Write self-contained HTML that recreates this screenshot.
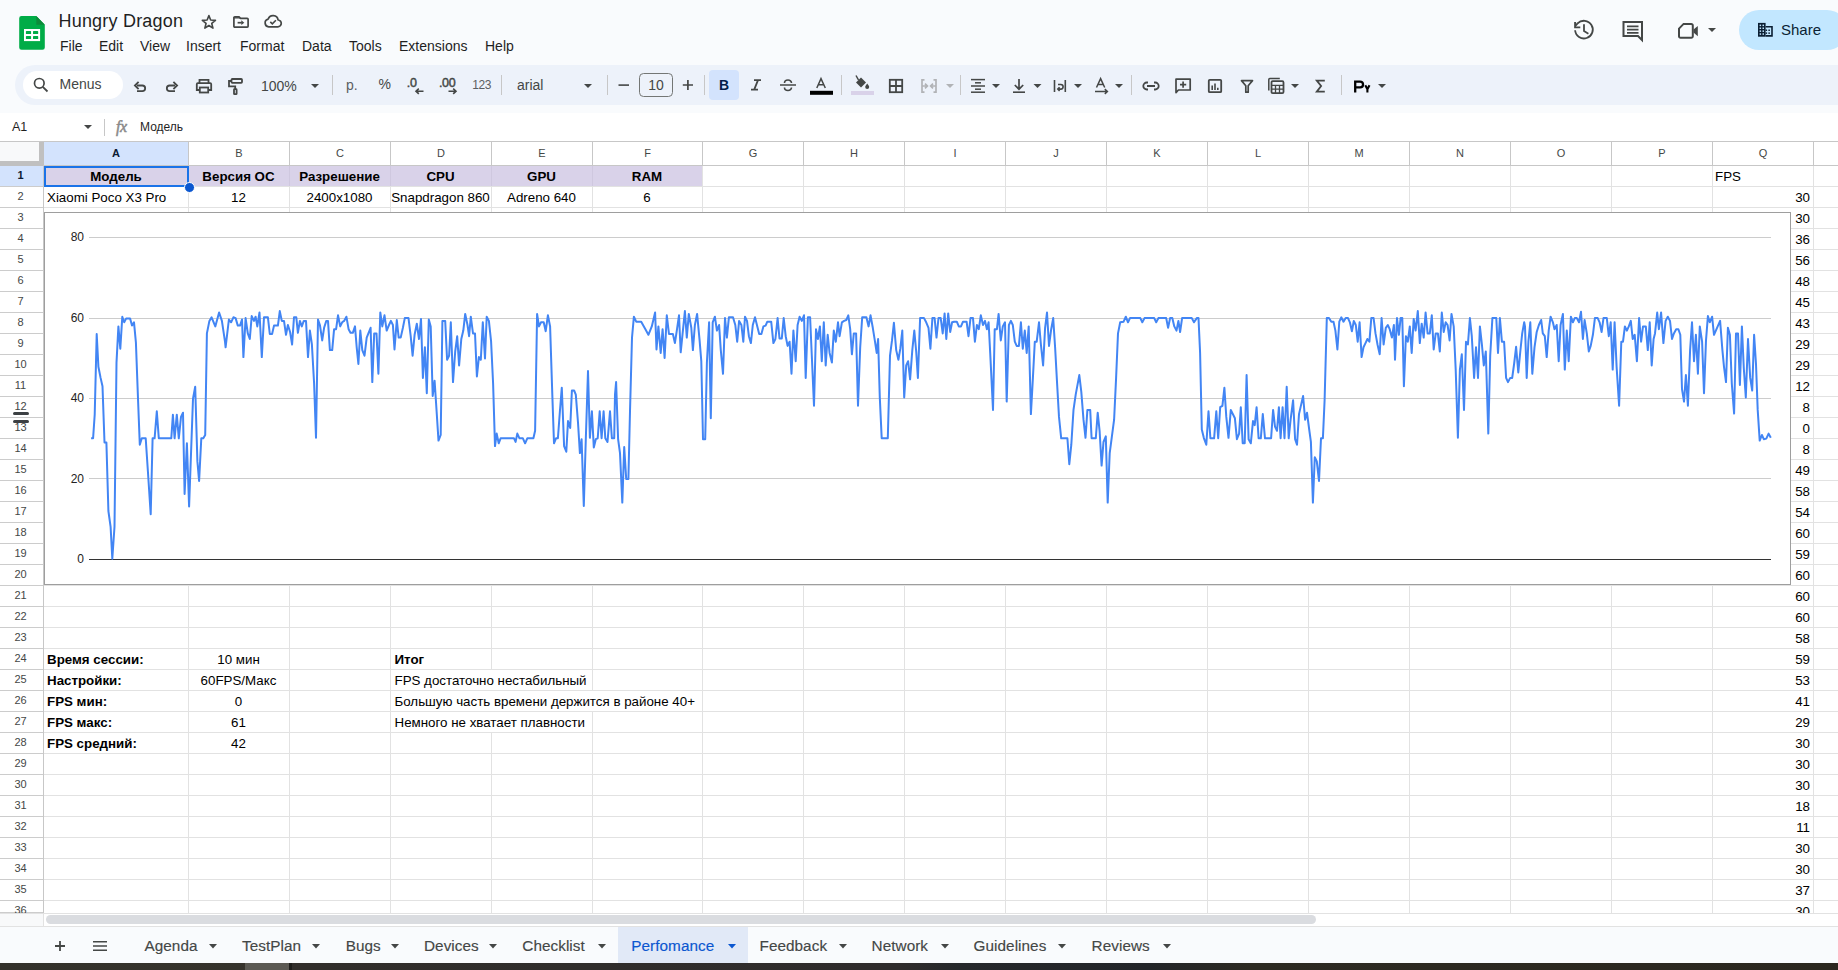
<!DOCTYPE html><html><head><meta charset="utf-8"><style>
*{margin:0;padding:0;box-sizing:border-box}
html,body{width:1838px;height:970px;overflow:hidden;background:#f9fbfd;font-family:"Liberation Sans", sans-serif;position:relative}
.a{position:absolute}
.t{position:absolute;white-space:nowrap}
.menu{position:absolute;top:37px;font-size:14px;color:#1f1f1f;line-height:18px}
.ch{position:absolute;top:142px;height:23px;font-size:11px;color:#444746;text-align:center;line-height:22px;background:#fff;border-right:1px solid #c7c7c7}
.rh{position:absolute;left:0;width:43px;padding-right:2px;font-size:11px;color:#444746;text-align:center;background:#fff;border-bottom:1px solid #cccccc}
.cell{position:absolute;font-size:13.33px;color:#000;white-space:nowrap;line-height:24px;height:21px}
.tab{position:absolute;top:928px;height:36px;font-size:15.3px;letter-spacing:0.05px;color:#444746;line-height:36px;-webkit-text-stroke:0.15px currentColor}
</style></head><body>
<svg class="a" style="left:18px;top:15px" width="28" height="36" viewBox="18 15 28 36">
<path d="M21.5 16H36.3L44.8 24.7V47.5A2.3 2.3 0 0 1 42.5 49.8H21.5A2.3 2.3 0 0 1 19.2 47.5V18.3A2.3 2.3 0 0 1 21.5 16Z" fill="#00ac47"/>
<path d="M36.3 16L44.8 24.7H36.3Z" fill="#0d8b3a"/>
<rect x="24" y="29" width="16.1" height="12.1" fill="#fff"/>
<rect x="25.9" y="31.1" width="5.2" height="2.9" rx="0.6" fill="#00ac47"/><rect x="33" y="31.1" width="5.2" height="2.9" rx="0.6" fill="#00ac47"/>
<rect x="25.9" y="36.1" width="5.2" height="2.9" rx="0.6" fill="#00ac47"/><rect x="33" y="36.1" width="5.2" height="2.9" rx="0.6" fill="#00ac47"/>
</svg>
<div class="t" style="left:58.5px;top:10px;font-size:18px;line-height:22px;color:#1f1f1f;letter-spacing:0.2px">Hungry Dragon</div>
<svg class="a" style="left:196px;top:10px" width="26" height="24" viewBox="196 10 26 24"><polygon points="208.90,15.60 210.66,20.07 215.46,20.37 211.75,23.43 212.96,28.08 208.90,25.50 204.84,28.08 206.05,23.43 202.34,20.37 207.14,20.07" fill="none" stroke="#444746" stroke-width="1.6" stroke-linejoin="round"/></svg>
<svg class="a" style="left:228px;top:10px" width="26" height="24" viewBox="228 10 26 24"><path d="M233.9 17.2V26.2A0.9 0.9 0 0 0 234.8 27.1H247.2A0.9 0.9 0 0 0 248.1 26.2V19.3A0.9 0.9 0 0 0 247.2 18.4H240.6L239 16.8H234.8A0.9 0.9 0 0 0 233.9 17.7Z" fill="none" stroke="#444746" stroke-width="1.7"/><path d="M233.9 17.2H239.2L240.6 18.6H233.9Z" fill="#444746"/><path d="M237.6 22.7H241.8" stroke="#444746" stroke-width="1.7"/><path d="M241.3 20.3L244.3 22.7 241.3 25.1Z" fill="#444746"/></svg>
<svg class="a" style="left:260px;top:10px" width="26" height="22" viewBox="260 10 26 22"><path d="M268.7 26.8H277.6A3.4 3.4 0 0 0 278.1 20 5.1 5.1 0 0 0 268.2 19.1 3.9 3.9 0 0 0 268.7 26.8Z" fill="none" stroke="#444746" stroke-width="1.7" stroke-linejoin="round"/><path d="M270.3 21.9L272.3 23.8 275.9 20.2" fill="none" stroke="#444746" stroke-width="1.6"/></svg>
<div class="menu" style="left:60px">File</div>
<div class="menu" style="left:99px">Edit</div>
<div class="menu" style="left:140px">View</div>
<div class="menu" style="left:186px">Insert</div>
<div class="menu" style="left:240px">Format</div>
<div class="menu" style="left:302px">Data</div>
<div class="menu" style="left:349px">Tools</div>
<div class="menu" style="left:399px">Extensions</div>
<div class="menu" style="left:485px">Help</div>
<svg class="a" style="left:1570px;top:16px" width="28" height="28" viewBox="1570 16 28 28"><path d="M1575.1 30.3A8.85 8.85 0 1 0 1577.6 23.4" fill="none" stroke="#444746" stroke-width="1.8"/><path d="M1577.8 23.2L1575.6 25.6" stroke="#444746" stroke-width="1.8"/><path d="M1575.1 22.1V27.4H1580.3" fill="none" stroke="#444746" stroke-width="1.9"/><path d="M1584 24.3V31l4.4 2.7" fill="none" stroke="#444746" stroke-width="1.8"/></svg>
<svg class="a" style="left:1620px;top:18px" width="26" height="26" viewBox="1620 18 26 26"><path d="M1623.5 22h18.5v18l-4-4h-14.5z" fill="none" stroke="#444746" stroke-width="2" stroke-linejoin="miter"/><path d="M1627 26.3h11.5M1627 29.6h11.5M1627 32.9h11.5" stroke="#444746" stroke-width="1.7"/></svg>
<svg class="a" style="left:1670px;top:14px" width="50" height="32" viewBox="1670 14 50 32"><path d="M1679 28.6L1683.6 23.9H1691.3A1.5 1.5 0 0 1 1692.8 25.4V36.3A1.5 1.5 0 0 1 1691.3 37.8H1680.5A1.5 1.5 0 0 1 1679 36.3Z" fill="none" stroke="#444746" stroke-width="2"/><path d="M1693.5 29.6L1697.8 26V36.2L1693.5 32.6Z" fill="#444746"/><path d="M1708 28h8l-4 4z" fill="#444746"/></svg>
<div class="a" style="left:1739px;top:10px;width:108px;height:40px;border-radius:20px;background:#c2e7ff"></div>
<svg class="a" style="left:1756px;top:21px" width="20" height="18" viewBox="1756 21 20 18"><rect x="1758" y="22.9" width="7.6" height="13.8" fill="#0b1f33"/><g fill="#c2e7ff"><rect x="1759.6" y="24.6" width="1.5" height="1.5"/><rect x="1762.5" y="24.6" width="1.5" height="1.5"/><rect x="1759.6" y="27.5" width="1.5" height="1.5"/><rect x="1762.5" y="27.5" width="1.5" height="1.5"/><rect x="1759.6" y="30.4" width="1.5" height="1.5"/><rect x="1762.5" y="30.4" width="1.5" height="1.5"/><rect x="1759.6" y="33.3" width="1.5" height="1.5"/><rect x="1762.5" y="33.3" width="1.5" height="1.5"/></g><path d="M1765.6 26.8H1772V35.9H1765.6" fill="none" stroke="#0b1f33" stroke-width="1.6"/><rect x="1765.6" y="29.5" width="1.5" height="1.5" fill="#0b1f33"/><rect x="1768.4" y="29.5" width="1.5" height="1.5" fill="#0b1f33"/><rect x="1765.6" y="32.4" width="1.5" height="1.5" fill="#0b1f33"/><rect x="1768.4" y="32.4" width="1.5" height="1.5" fill="#0b1f33"/></svg>
<div class="t" style="left:1781px;top:20px;font-size:15px;line-height:20px;color:#0b1f33;font-weight:500">Share</div>
<div class="a" style="left:15px;top:65px;width:1900px;height:40px;border-radius:20px;background:#edf2fa"></div>
<div class="a" style="left:23px;top:71px;width:100px;height:28px;border-radius:14px;background:#fff"></div>
<svg class="a" style="left:33px;top:77px" width="16" height="16" viewBox="0 0 16 16"><circle cx="6.3" cy="6.3" r="4.8" fill="none" stroke="#444746" stroke-width="1.7"/><path d="M9.8 9.8L14.5 14.5" stroke="#444746" stroke-width="1.8"/></svg>
<div class="t" style="left:59.5px;top:75px;font-size:14px;line-height:18px;color:#444746">Menus</div>
<svg class="a" style="left:0;top:65px" width="1838" height="40" viewBox="0 65 1838 40" font-family="Liberation Sans, sans-serif">
<path d="M137 85.5h5.3a2.85 2.85 0 0 1 0 5.7H137" fill="none" stroke="#444746" stroke-width="1.8"/><path d="M138.6 81.8L134.9 85.5 138.6 89.2" fill="none" stroke="#444746" stroke-width="1.8"/>
<path d="M175 85.5h-5.3a2.85 2.85 0 0 0 0 5.7H175" fill="none" stroke="#444746" stroke-width="1.8"/><path d="M173.4 81.8L177.1 85.5 173.4 89.2" fill="none" stroke="#444746" stroke-width="1.8"/>
<path d="M199.5 83.5V79.8h9v3.7" fill="none" stroke="#444746" stroke-width="1.8"/><path d="M199.2 90h-2.4v-5.8a1 1 0 0 1 1-1h12.4a1 1 0 0 1 1 1V90h-2.4" fill="none" stroke="#444746" stroke-width="1.8"/><rect x="199.8" y="87.5" width="8.4" height="5" fill="none" stroke="#444746" stroke-width="1.8"/>
<rect x="231.5" y="79" width="10.5" height="3.8" rx="0.8" fill="none" stroke="#444746" stroke-width="1.8"/><path d="M231.5 81H229v5.3h6.2v2.6" fill="none" stroke="#444746" stroke-width="1.8"/><rect x="234" y="89.2" width="2.6" height="5" rx="0.5" fill="none" stroke="#444746" stroke-width="1.8"/>
<text x="261" y="91" font-size="14" fill="#444746">100%</text>
<path d="M311 84h8l-4 4z" fill="#444746"/>
<rect x="332" y="75" width="1" height="20" fill="#c7c7c7"/>
<text x="346" y="90" font-size="14" fill="#5b5e62">р.</text>
<text x="378.5" y="89" font-size="14" fill="#444746">%</text>
<text x="406.8" y="86.9" font-size="12.5" fill="#444746" stroke="#444746" stroke-width="0.45" letter-spacing="-0.3">.0</text><path d="M423.5 91.2h-7.5M418.8 88.6l-2.8 2.6 2.8 2.6" fill="none" stroke="#444746" stroke-width="1.6"/>
<text x="439" y="86.9" font-size="12.5" fill="#444746" stroke="#444746" stroke-width="0.45" letter-spacing="-0.35">.00</text><path d="M448.5 91.2h7.5M453.2 88.6l2.8 2.6-2.8 2.6" fill="none" stroke="#444746" stroke-width="1.6"/>
<text x="472.3" y="89.2" font-size="12" fill="#5b5e62" letter-spacing="-0.4">123</text>
<rect x="501" y="75" width="1" height="20" fill="#c7c7c7"/>
<text x="517" y="90" font-size="14" fill="#444746">arial</text>
<path d="M584 84h8l-4 4z" fill="#444746"/>
<rect x="607" y="75" width="1" height="20" fill="#c7c7c7"/>
<rect x="618.5" y="84.3" width="10.5" height="1.6" fill="#444746"/>
<rect x="639.5" y="73.5" width="33" height="23" rx="4" fill="none" stroke="#747775" stroke-width="1"/>
<text x="656" y="90" font-size="14" text-anchor="middle" fill="#444746">10</text>
<path d="M682.8 85h10.2M687.9 79.9v10.2" fill="none" stroke="#444746" stroke-width="1.7"/>
<rect x="704" y="75" width="1" height="20" fill="#c7c7c7"/>
<rect x="709" y="70" width="30" height="30" rx="4" fill="#d3e3fd"/>
<text x="724" y="90" font-size="14" font-weight="bold" text-anchor="middle" fill="#041e49">B</text>
<path d="M754 80.2h7M751 89.6h7M758 80.2l-3.8 9.4" fill="none" stroke="#444746" stroke-width="1.8"/>
<path d="M780 85h16" stroke="#444746" stroke-width="1.5"/><path d="M784.5 83a3.5 3 0 0 1 7 0" fill="none" stroke="#444746" stroke-width="1.6"/><path d="M784.5 87.5a3.5 3 0 0 0 7 0" fill="none" stroke="#444746" stroke-width="1.6"/>
<path d="M816.8 88L821 78.6 825.3 88M818.3 84.8h5.4" fill="none" stroke="#444746" stroke-width="1.5"/><rect x="810" y="90.8" width="23" height="4" fill="#000"/>
<rect x="841" y="75" width="1" height="20" fill="#c7c7c7"/>
<path d="M856 82.5l5-5 5 5-5 5z" fill="#444746"/><path d="M858.5 80l-2.5-4.5" stroke="#444746" stroke-width="1.5"/><path d="M867.2 83.5q-2 2.6-2 3.4a2 2 0 0 0 4 0q0-.8-2-3.4z" fill="#444746"/><rect x="851" y="91" width="23" height="4" fill="#d9d2e9"/>
<rect x="889.8" y="79.8" width="12.4" height="12.4" fill="none" stroke="#444746" stroke-width="1.8"/><path d="M896 79.8v12.4M889.8 86h12.4" fill="none" stroke="#444746" stroke-width="1.8"/>
<path d="M924.5 79.8h-2.5v12.4h2.5M933.5 79.8h2.5v12.4h-2.5M922 86h4.5M936 86h-4.5M925 83.6l2.4 2.4-2.4 2.4M933 83.6l-2.4 2.4 2.4 2.4" fill="none" stroke="#b1b3b6" stroke-width="1.7"/>
<path d="M946 84h8l-4 4z" fill="#b1b3b6"/>
<rect x="960" y="75" width="1" height="20" fill="#c7c7c7"/>
<rect x="971" y="78.85" width="14" height="1.5" fill="#444746"/>
<rect x="975" y="82.05" width="6" height="1.5" fill="#444746"/>
<rect x="971" y="85.25" width="14" height="1.5" fill="#444746"/>
<rect x="975" y="88.45" width="6" height="1.5" fill="#444746"/>
<rect x="971" y="91.45" width="14" height="1.5" fill="#444746"/>
<path d="M992 84h8l-4 4z" fill="#444746"/>
<path d="M1019 79v10M1014.8 85l4.2 4.2 4.2-4.2" fill="none" stroke="#444746" stroke-width="1.7"/><rect x="1013" y="91.4" width="12" height="1.6" fill="#444746"/>
<path d="M1033.5 84h8l-4 4z" fill="#444746"/>
<path d="M1054.5 80v12M1065.3 80v12M1058 84.5h2.8a2.3 2.3 0 0 1 0 4.6H1058M1059.6 87.2l-1.8 1.9 1.8 1.9" fill="none" stroke="#444746" stroke-width="1.6"/>
<path d="M1074 84h8l-4 4z" fill="#444746"/>
<path d="M1096.5 87.5L1100.6 78.6 1104.7 87.5M1098 84.5h5.2M1095 91.5h12.5M1104.8 89.1l2.6 2.4-2.6 2.4" fill="none" stroke="#444746" stroke-width="1.5"/>
<path d="M1115 84h8l-4 4z" fill="#444746"/>
<rect x="1131" y="75" width="1" height="20" fill="#c7c7c7"/>
<path d="M1148 82.5h-1.2a3.5 3.5 0 0 0 0 7h1.2M1154 82.5h1.2a3.5 3.5 0 0 1 0 7h-1.2M1147 86h8" fill="none" stroke="#444746" stroke-width="1.8"/>
<path d="M1176 79.2h14.2v10.8h-11.8l-2.4 2.6z" fill="none" stroke="#444746" stroke-width="1.7" stroke-linejoin="round"/><path d="M1183.1 81.5v6.2M1180 84.6h6.2" stroke="#444746" stroke-width="1.7"/>
<rect x="1208.8" y="79.8" width="12.4" height="12.4" rx="1" fill="none" stroke="#444746" stroke-width="1.8"/><path d="M1212.2 90v-4.5M1215 90v-6.5M1217.8 90v-2.2" stroke="#444746" stroke-width="1.6"/>
<path d="M1241.5 80.6h11l-4.3 5.2v6.4h-2.4v-6.4z" fill="none" stroke="#444746" stroke-width="1.7" stroke-linejoin="round"/>
<path d="M1268.8 90.5V79.5a1 1 0 0 1 1-1h10" fill="none" stroke="#444746" stroke-width="1.5"/><rect x="1271.5" y="81.2" width="12" height="12" rx="1.2" fill="none" stroke="#444746" stroke-width="1.8"/><path d="M1271.5 85.4h12M1271.5 89.2h12M1275.5 85.4v7.8M1279.5 85.4v7.8" stroke="#444746" stroke-width="1.3"/>
<path d="M1291 84h8l-4 4z" fill="#444746"/>
<path d="M1324.8 80.6h-8l4.3 5.4-4.3 5.6h8" fill="none" stroke="#444746" stroke-width="1.8"/>
<rect x="1341" y="75" width="1" height="20" fill="#c7c7c7"/>
<path d="M1355.2 92.4V81.6H1360.2A2.85 2.85 0 0 1 1360.2 87.3H1355.2" fill="none" stroke="#000" stroke-width="2.3"/><path d="M1365.3 85.3L1367.4 89.2 1369.5 85.3M1367.4 89.2V92.4" fill="none" stroke="#000" stroke-width="2.1"/>
<path d="M1378 84h8l-4 4z" fill="#444746"/>
</svg>
<div class="a" style="left:0;top:113px;width:1838px;height:29px;background:#fff"></div>
<div class="t" style="left:12px;top:119px;font-size:12.5px;line-height:16px;color:#1f1f1f">A1</div>
<div class="a" style="left:84px;top:125px;width:0;height:0;border-left:4.5px solid transparent;border-right:4.5px solid transparent;border-top:4.5px solid #444746"></div>
<div class="a" style="left:104px;top:119px;width:1px;height:17px;background:#c7c7c7"></div>
<div class="t" style="left:116px;top:117px;font-size:16px;line-height:20px;color:#8a8a8a;font-family:'Liberation Serif',serif;font-style:italic;-webkit-text-stroke:0.5px #8a8a8a;letter-spacing:-0.5px">fx</div>
<div class="t" style="left:140px;top:119px;font-size:12px;line-height:16px;color:#1f1f1f">Модель</div>
<div class="a" style="left:0;top:141px;width:1838px;height:772px;background:#fff"></div>
<div class="a" style="left:0;top:141px;width:1838px;height:1px;background:#c7c7c7"></div>
<div class="a" style="left:188px;top:165px;width:1px;height:748px;background:#e2e2e2"></div>
<div class="a" style="left:289px;top:165px;width:1px;height:748px;background:#e2e2e2"></div>
<div class="a" style="left:390px;top:165px;width:1px;height:748px;background:#e2e2e2"></div>
<div class="a" style="left:491px;top:165px;width:1px;height:748px;background:#e2e2e2"></div>
<div class="a" style="left:592px;top:165px;width:1px;height:748px;background:#e2e2e2"></div>
<div class="a" style="left:702px;top:165px;width:1px;height:748px;background:#e2e2e2"></div>
<div class="a" style="left:803px;top:165px;width:1px;height:748px;background:#e2e2e2"></div>
<div class="a" style="left:904px;top:165px;width:1px;height:748px;background:#e2e2e2"></div>
<div class="a" style="left:1005px;top:165px;width:1px;height:748px;background:#e2e2e2"></div>
<div class="a" style="left:1106px;top:165px;width:1px;height:748px;background:#e2e2e2"></div>
<div class="a" style="left:1207px;top:165px;width:1px;height:748px;background:#e2e2e2"></div>
<div class="a" style="left:1308px;top:165px;width:1px;height:748px;background:#e2e2e2"></div>
<div class="a" style="left:1409px;top:165px;width:1px;height:748px;background:#e2e2e2"></div>
<div class="a" style="left:1510px;top:165px;width:1px;height:748px;background:#e2e2e2"></div>
<div class="a" style="left:1611px;top:165px;width:1px;height:748px;background:#e2e2e2"></div>
<div class="a" style="left:1712px;top:165px;width:1px;height:748px;background:#e2e2e2"></div>
<div class="a" style="left:1813px;top:165px;width:1px;height:748px;background:#e2e2e2"></div>
<div class="a" style="left:44px;top:186px;width:1800px;height:1px;background:#e2e2e2"></div>
<div class="a" style="left:44px;top:207px;width:1800px;height:1px;background:#e2e2e2"></div>
<div class="a" style="left:44px;top:228px;width:1800px;height:1px;background:#e2e2e2"></div>
<div class="a" style="left:44px;top:249px;width:1800px;height:1px;background:#e2e2e2"></div>
<div class="a" style="left:44px;top:270px;width:1800px;height:1px;background:#e2e2e2"></div>
<div class="a" style="left:44px;top:291px;width:1800px;height:1px;background:#e2e2e2"></div>
<div class="a" style="left:44px;top:312px;width:1800px;height:1px;background:#e2e2e2"></div>
<div class="a" style="left:44px;top:333px;width:1800px;height:1px;background:#e2e2e2"></div>
<div class="a" style="left:44px;top:354px;width:1800px;height:1px;background:#e2e2e2"></div>
<div class="a" style="left:44px;top:375px;width:1800px;height:1px;background:#e2e2e2"></div>
<div class="a" style="left:44px;top:396px;width:1800px;height:1px;background:#e2e2e2"></div>
<div class="a" style="left:44px;top:417px;width:1800px;height:1px;background:#e2e2e2"></div>
<div class="a" style="left:44px;top:438px;width:1800px;height:1px;background:#e2e2e2"></div>
<div class="a" style="left:44px;top:459px;width:1800px;height:1px;background:#e2e2e2"></div>
<div class="a" style="left:44px;top:480px;width:1800px;height:1px;background:#e2e2e2"></div>
<div class="a" style="left:44px;top:501px;width:1800px;height:1px;background:#e2e2e2"></div>
<div class="a" style="left:44px;top:522px;width:1800px;height:1px;background:#e2e2e2"></div>
<div class="a" style="left:44px;top:543px;width:1800px;height:1px;background:#e2e2e2"></div>
<div class="a" style="left:44px;top:564px;width:1800px;height:1px;background:#e2e2e2"></div>
<div class="a" style="left:44px;top:585px;width:1800px;height:1px;background:#e2e2e2"></div>
<div class="a" style="left:44px;top:606px;width:1800px;height:1px;background:#e2e2e2"></div>
<div class="a" style="left:44px;top:627px;width:1800px;height:1px;background:#e2e2e2"></div>
<div class="a" style="left:44px;top:648px;width:1800px;height:1px;background:#e2e2e2"></div>
<div class="a" style="left:44px;top:669px;width:1800px;height:1px;background:#e2e2e2"></div>
<div class="a" style="left:44px;top:690px;width:1800px;height:1px;background:#e2e2e2"></div>
<div class="a" style="left:44px;top:711px;width:1800px;height:1px;background:#e2e2e2"></div>
<div class="a" style="left:44px;top:732px;width:1800px;height:1px;background:#e2e2e2"></div>
<div class="a" style="left:44px;top:753px;width:1800px;height:1px;background:#e2e2e2"></div>
<div class="a" style="left:44px;top:774px;width:1800px;height:1px;background:#e2e2e2"></div>
<div class="a" style="left:44px;top:795px;width:1800px;height:1px;background:#e2e2e2"></div>
<div class="a" style="left:44px;top:816px;width:1800px;height:1px;background:#e2e2e2"></div>
<div class="a" style="left:44px;top:837px;width:1800px;height:1px;background:#e2e2e2"></div>
<div class="a" style="left:44px;top:858px;width:1800px;height:1px;background:#e2e2e2"></div>
<div class="a" style="left:44px;top:879px;width:1800px;height:1px;background:#e2e2e2"></div>
<div class="a" style="left:44px;top:900px;width:1800px;height:1px;background:#e2e2e2"></div>
<div class="a" style="left:491px;top:670px;width:1px;height:20px;background:#fff"></div>
<div class="a" style="left:491px;top:691px;width:1px;height:20px;background:#fff"></div>
<div class="a" style="left:592px;top:691px;width:1px;height:20px;background:#fff"></div>
<div class="a" style="left:491px;top:712px;width:1px;height:20px;background:#fff"></div>
<div class="ch" style="left:44px;width:145px;background:#d3e3fd;font-weight:bold;color:#0b1b33;">A</div>
<div class="ch" style="left:189px;width:101px;background:#fff;">B</div>
<div class="ch" style="left:290px;width:101px;background:#fff;">C</div>
<div class="ch" style="left:391px;width:101px;background:#fff;">D</div>
<div class="ch" style="left:492px;width:101px;background:#fff;">E</div>
<div class="ch" style="left:593px;width:110px;background:#fff;">F</div>
<div class="ch" style="left:703px;width:101px;background:#fff;">G</div>
<div class="ch" style="left:804px;width:101px;background:#fff;">H</div>
<div class="ch" style="left:905px;width:101px;background:#fff;">I</div>
<div class="ch" style="left:1006px;width:101px;background:#fff;">J</div>
<div class="ch" style="left:1107px;width:101px;background:#fff;">K</div>
<div class="ch" style="left:1208px;width:101px;background:#fff;">L</div>
<div class="ch" style="left:1309px;width:101px;background:#fff;">M</div>
<div class="ch" style="left:1410px;width:101px;background:#fff;">N</div>
<div class="ch" style="left:1511px;width:101px;background:#fff;">O</div>
<div class="ch" style="left:1612px;width:101px;background:#fff;">P</div>
<div class="ch" style="left:1713px;width:101px;background:#fff;">Q</div>
<div class="ch" style="left:1814px;width:101px;background:#fff;"></div>
<div class="a" style="left:0;top:165px;width:1838px;height:1px;background:#c7c7c7"></div>
<div class="a" style="left:0;top:142px;width:44px;height:23px;background:#f8f9fa"></div>
<div class="a" style="left:39px;top:142px;width:5px;height:24px;background:#c0c0c0"></div>
<div class="a" style="left:0;top:161px;width:44px;height:5px;background:#c0c0c0"></div>
<div class="rh" style="top:166px;height:21px;line-height:19px;background:#d3e3fd;font-weight:bold;color:#0b1b33;">1</div>
<div class="rh" style="top:187px;height:21px;line-height:19px;background:#fff;">2</div>
<div class="rh" style="top:208px;height:21px;line-height:19px;background:#fff;">3</div>
<div class="rh" style="top:229px;height:21px;line-height:19px;background:#fff;">4</div>
<div class="rh" style="top:250px;height:21px;line-height:19px;background:#fff;">5</div>
<div class="rh" style="top:271px;height:21px;line-height:19px;background:#fff;">6</div>
<div class="rh" style="top:292px;height:21px;line-height:19px;background:#fff;">7</div>
<div class="rh" style="top:313px;height:21px;line-height:19px;background:#fff;">8</div>
<div class="rh" style="top:334px;height:21px;line-height:19px;background:#fff;">9</div>
<div class="rh" style="top:355px;height:21px;line-height:19px;background:#fff;">10</div>
<div class="rh" style="top:376px;height:21px;line-height:19px;background:#fff;">11</div>
<div class="rh" style="top:397px;height:21px;line-height:19px;background:#fff;">12</div>
<div class="rh" style="top:418px;height:21px;line-height:19px;background:#fff;">13</div>
<div class="rh" style="top:439px;height:21px;line-height:19px;background:#fff;">14</div>
<div class="rh" style="top:460px;height:21px;line-height:19px;background:#fff;">15</div>
<div class="rh" style="top:481px;height:21px;line-height:19px;background:#fff;">16</div>
<div class="rh" style="top:502px;height:21px;line-height:19px;background:#fff;">17</div>
<div class="rh" style="top:523px;height:21px;line-height:19px;background:#fff;">18</div>
<div class="rh" style="top:544px;height:21px;line-height:19px;background:#fff;">19</div>
<div class="rh" style="top:565px;height:21px;line-height:19px;background:#fff;">20</div>
<div class="rh" style="top:586px;height:21px;line-height:19px;background:#fff;">21</div>
<div class="rh" style="top:607px;height:21px;line-height:19px;background:#fff;">22</div>
<div class="rh" style="top:628px;height:21px;line-height:19px;background:#fff;">23</div>
<div class="rh" style="top:649px;height:21px;line-height:19px;background:#fff;">24</div>
<div class="rh" style="top:670px;height:21px;line-height:19px;background:#fff;">25</div>
<div class="rh" style="top:691px;height:21px;line-height:19px;background:#fff;">26</div>
<div class="rh" style="top:712px;height:21px;line-height:19px;background:#fff;">27</div>
<div class="rh" style="top:733px;height:21px;line-height:19px;background:#fff;">28</div>
<div class="rh" style="top:754px;height:21px;line-height:19px;background:#fff;">29</div>
<div class="rh" style="top:775px;height:21px;line-height:19px;background:#fff;">30</div>
<div class="rh" style="top:796px;height:21px;line-height:19px;background:#fff;">31</div>
<div class="rh" style="top:817px;height:21px;line-height:19px;background:#fff;">32</div>
<div class="rh" style="top:838px;height:21px;line-height:19px;background:#fff;">33</div>
<div class="rh" style="top:859px;height:21px;line-height:19px;background:#fff;">34</div>
<div class="rh" style="top:880px;height:21px;line-height:19px;background:#fff;">35</div>
<div class="rh" style="top:901px;height:12px;line-height:19px;background:#fff;">36</div>
<div class="a" style="left:43px;top:165px;width:1px;height:748px;background:#c7c7c7"></div>
<div class="a" style="left:44px;top:166px;width:658px;height:20px;background:#d9d2e9"></div>
<div class="a" style="left:188px;top:166px;width:1px;height:20px;background:#cfc8df"></div>
<div class="a" style="left:289px;top:166px;width:1px;height:20px;background:#cfc8df"></div>
<div class="a" style="left:390px;top:166px;width:1px;height:20px;background:#cfc8df"></div>
<div class="a" style="left:491px;top:166px;width:1px;height:20px;background:#cfc8df"></div>
<div class="a" style="left:592px;top:166px;width:1px;height:20px;background:#cfc8df"></div>
<div class="cell" style="left:44px;top:165px;width:144px;text-align:center;font-weight:bold;">Модель</div>
<div class="cell" style="left:188px;top:165px;width:101px;text-align:center;font-weight:bold;">Версия ОС</div>
<div class="cell" style="left:289px;top:165px;width:101px;text-align:center;font-weight:bold;">Разрешение</div>
<div class="cell" style="left:390px;top:165px;width:101px;text-align:center;font-weight:bold;">CPU</div>
<div class="cell" style="left:491px;top:165px;width:101px;text-align:center;font-weight:bold;">GPU</div>
<div class="cell" style="left:592px;top:165px;width:110px;text-align:center;font-weight:bold;">RAM</div>
<div class="cell" style="left:47px;top:186px;">Xiaomi Poco X3 Pro</div>
<div class="cell" style="left:188px;top:186px;width:101px;text-align:center;">12</div>
<div class="cell" style="left:289px;top:186px;width:101px;text-align:center;">2400x1080</div>
<div class="cell" style="left:390px;top:186px;width:101px;text-align:center;">Snapdragon 860</div>
<div class="cell" style="left:491px;top:186px;width:101px;text-align:center;">Adreno 640</div>
<div class="cell" style="left:592px;top:186px;width:110px;text-align:center;">6</div>
<div class="cell" style="left:1715px;top:165px;">FPS</div>
<div class="cell" style="left:1712px;top:186px;width:98px;text-align:right;">30</div>
<div class="cell" style="left:1712px;top:207px;width:98px;text-align:right;">30</div>
<div class="cell" style="left:1712px;top:228px;width:98px;text-align:right;">36</div>
<div class="cell" style="left:1712px;top:249px;width:98px;text-align:right;">56</div>
<div class="cell" style="left:1712px;top:270px;width:98px;text-align:right;">48</div>
<div class="cell" style="left:1712px;top:291px;width:98px;text-align:right;">45</div>
<div class="cell" style="left:1712px;top:312px;width:98px;text-align:right;">43</div>
<div class="cell" style="left:1712px;top:333px;width:98px;text-align:right;">29</div>
<div class="cell" style="left:1712px;top:354px;width:98px;text-align:right;">29</div>
<div class="cell" style="left:1712px;top:375px;width:98px;text-align:right;">12</div>
<div class="cell" style="left:1712px;top:396px;width:98px;text-align:right;">8</div>
<div class="cell" style="left:1712px;top:417px;width:98px;text-align:right;">0</div>
<div class="cell" style="left:1712px;top:438px;width:98px;text-align:right;">8</div>
<div class="cell" style="left:1712px;top:459px;width:98px;text-align:right;">49</div>
<div class="cell" style="left:1712px;top:480px;width:98px;text-align:right;">58</div>
<div class="cell" style="left:1712px;top:501px;width:98px;text-align:right;">54</div>
<div class="cell" style="left:1712px;top:522px;width:98px;text-align:right;">60</div>
<div class="cell" style="left:1712px;top:543px;width:98px;text-align:right;">59</div>
<div class="cell" style="left:1712px;top:564px;width:98px;text-align:right;">60</div>
<div class="cell" style="left:1712px;top:585px;width:98px;text-align:right;">60</div>
<div class="cell" style="left:1712px;top:606px;width:98px;text-align:right;">60</div>
<div class="cell" style="left:1712px;top:627px;width:98px;text-align:right;">58</div>
<div class="cell" style="left:1712px;top:648px;width:98px;text-align:right;">59</div>
<div class="cell" style="left:1712px;top:669px;width:98px;text-align:right;">53</div>
<div class="cell" style="left:1712px;top:690px;width:98px;text-align:right;">41</div>
<div class="cell" style="left:1712px;top:711px;width:98px;text-align:right;">29</div>
<div class="cell" style="left:1712px;top:732px;width:98px;text-align:right;">30</div>
<div class="cell" style="left:1712px;top:753px;width:98px;text-align:right;">30</div>
<div class="cell" style="left:1712px;top:774px;width:98px;text-align:right;">30</div>
<div class="cell" style="left:1712px;top:795px;width:98px;text-align:right;">18</div>
<div class="cell" style="left:1712px;top:816px;width:98px;text-align:right;">11</div>
<div class="cell" style="left:1712px;top:837px;width:98px;text-align:right;">30</div>
<div class="cell" style="left:1712px;top:858px;width:98px;text-align:right;">30</div>
<div class="cell" style="left:1712px;top:879px;width:98px;text-align:right;">37</div>
<div class="cell" style="left:1712px;top:900px;width:98px;text-align:right;">30</div>
<div class="cell" style="left:47px;top:648px;font-weight:bold;">Время сессии:</div>
<div class="cell" style="left:188px;top:648px;width:101px;text-align:center;">10 мин</div>
<div class="cell" style="left:394.5px;top:648px;font-weight:bold;">Итог</div>
<div class="cell" style="left:47px;top:669px;font-weight:bold;">Настройки:</div>
<div class="cell" style="left:188px;top:669px;width:101px;text-align:center;">60FPS/Макс</div>
<div class="cell" style="left:394.5px;top:669px;">FPS достаточно нестабильный</div>
<div class="cell" style="left:47px;top:690px;font-weight:bold;">FPS мин:</div>
<div class="cell" style="left:188px;top:690px;width:101px;text-align:center;">0</div>
<div class="cell" style="left:394.5px;top:690px;">Большую часть времени держится в районе 40+</div>
<div class="cell" style="left:47px;top:711px;font-weight:bold;">FPS макс:</div>
<div class="cell" style="left:188px;top:711px;width:101px;text-align:center;">61</div>
<div class="cell" style="left:394.5px;top:711px;">Немного не хватает плавности</div>
<div class="cell" style="left:47px;top:732px;font-weight:bold;">FPS средний:</div>
<div class="cell" style="left:188px;top:732px;width:101px;text-align:center;">42</div>
<div class="a" style="left:44px;top:166px;width:145px;height:21px;border:2px solid #1a73e8"></div>
<div class="a" style="left:183.5px;top:181.5px;width:11px;height:11px;border-radius:50%;background:#0b57d0;border:1px solid #fff"></div>
<div class="a" style="left:13px;top:412px;width:16px;height:3px;border-radius:1.5px;background:#3c4043"></div>
<div class="a" style="left:13px;top:420px;width:16px;height:3px;border-radius:1.5px;background:#3c4043"></div>
<svg class="a" style="left:44px;top:212px" width="1747" height="373" viewBox="44 212 1747 373">
<rect x="44.5" y="212.5" width="1746" height="372" fill="#fff" stroke="#9e9e9e" stroke-width="1"/>
<line x1="89" x2="1771" y1="478.5" y2="478.5" stroke="#cccccc" stroke-width="1"/>
<line x1="89" x2="1771" y1="398.5" y2="398.5" stroke="#cccccc" stroke-width="1"/>
<line x1="89" x2="1771" y1="318.5" y2="318.5" stroke="#cccccc" stroke-width="1"/>
<line x1="89" x2="1771" y1="237.5" y2="237.5" stroke="#cccccc" stroke-width="1"/>
<line x1="89" x2="1771" y1="559.5" y2="559.5" stroke="#333" stroke-width="1"/>
<text x="84" y="563.3" text-anchor="end" font-family="Liberation Sans, sans-serif" font-size="12" fill="#222">0</text>
<text x="84" y="482.8" text-anchor="end" font-family="Liberation Sans, sans-serif" font-size="12" fill="#222">20</text>
<text x="84" y="402.3" text-anchor="end" font-family="Liberation Sans, sans-serif" font-size="12" fill="#222">40</text>
<text x="84" y="321.8" text-anchor="end" font-family="Liberation Sans, sans-serif" font-size="12" fill="#222">60</text>
<text x="84" y="241.3" text-anchor="end" font-family="Liberation Sans, sans-serif" font-size="12" fill="#222">80</text>
<polyline points="91.1,438.3 93.1,438.3 94.7,414.7 96.7,334.0 98.4,366.8 100.6,377.9 102.5,386.3 104.5,442.5 106.4,442.5 108.4,511.0 110.6,526.8 112.3,558.8 114.5,526.8 116.5,362.6 118.4,326.4 120.3,348.7 122.3,316.7 124.2,322.3 126.2,318.4 128.1,318.4 130.1,318.4 132.0,325.6 134.0,322.3 135.9,342.3 137.9,396.0 139.8,444.7 141.8,438.3 143.7,438.3 145.7,438.3 147.9,471.2 150.7,514.3 152.6,438.3 154.6,438.3 156.8,411.3 158.8,438.3 171.3,438.3 172.9,414.7 174.6,438.3 176.8,414.7 178.8,438.3 181.0,416.9 183.0,412.7 184.6,494.0 186.9,443.3 189.1,506.5 193.0,398.8 195.2,386.8 197.4,461.4 199.1,480.9 201.3,438.3 203.3,438.3 205.2,435.0 206.9,333.4 209.4,320.9 211.6,317.3 215.3,326.4 219.1,312.5 221.9,320.9 225.0,341.7 225.6,347.3 228.9,319.5 231.1,322.3 233.4,317.3 235.6,318.1 237.8,325.6 240.0,325.6 242.0,319.5 243.4,357.1 245.6,318.1 247.8,333.4 249.8,339.0 251.7,316.1 254.0,320.9 255.6,316.7 257.3,326.4 259.5,312.5 261.8,357.1 264.0,317.3 267.9,317.3 269.8,334.0 272.1,334.0 274.0,325.6 277.9,325.6 279.8,311.1 281.8,320.9 284.0,320.9 286.0,334.8 287.9,325.0 290.1,332.0 292.1,344.5 294.0,317.3 296.3,317.3 297.9,332.8 299.9,320.9 301.8,326.4 303.8,320.9 306.0,320.9 308.0,357.1 309.9,330.6 311.9,344.5 314.1,383.5 316.0,437.8 318.0,319.5 319.9,325.0 322.2,340.4 324.1,327.8 326.3,320.9 328.0,320.9 329.9,350.1 332.2,350.1 334.1,329.2 336.1,329.2 338.0,315.3 340.2,326.4 342.2,322.3 344.1,320.9 346.4,316.7 348.6,329.2 350.5,332.8 352.8,332.8 355.0,326.4 356.7,347.3 358.4,364.0 360.3,330.6 362.3,350.1 364.5,355.7 366.7,337.6 370.6,327.8 372.3,382.1 374.2,333.4 376.5,333.4 378.4,373.8 380.3,312.5 382.3,326.4 384.5,315.3 386.7,330.6 389.0,325.0 390.9,320.9 392.9,325.0 394.5,349.5 396.8,320.0 398.7,337.6 400.7,337.6 402.9,327.8 404.8,318.1 408.5,318.1 410.7,336.2 412.6,355.7 414.6,334.8 416.8,323.7 419.0,339.0 421.0,318.9 422.9,377.9 424.9,347.3 426.8,393.2 428.8,319.5 430.7,326.4 432.7,396.0 434.6,380.7 436.6,411.3 438.5,440.6 440.7,435.0 442.4,320.9 445.2,320.9 447.1,359.8 449.1,355.7 450.8,322.3 453.0,382.1 455.2,351.5 457.2,336.2 459.1,365.4 461.3,339.0 463.3,330.6 465.2,313.9 467.5,325.0 469.1,336.2 470.8,316.7 473.0,333.4 475.0,333.4 476.9,376.5 478.9,357.1 480.8,359.8 482.8,322.3 485.0,358.4 486.7,316.7 488.9,320.9 491.1,341.7 493.1,383.5 495.0,446.1 496.7,433.6 498.7,443.3 500.6,438.3 514.0,438.3 515.6,441.9 517.3,433.6 519.5,438.3 522.9,438.3 525.1,443.3 527.3,438.3 533.4,438.3 535.1,430.8 537.1,313.9 539.0,326.4 541.0,322.3 543.7,322.3 545.7,331.2 547.9,315.3 550.1,326.4 552.4,397.4 554.0,443.3 556.0,438.3 557.9,438.3 559.9,411.3 561.8,387.7 564.1,446.1 566.3,451.7 568.0,421.1 570.2,428.0 571.9,390.5 574.1,390.5 575.8,394.6 578.0,422.5 579.9,453.1 581.6,439.2 583.8,506.0 585.8,439.2 588.0,371.0 589.9,437.8 591.9,411.3 593.8,447.5 595.8,439.2 597.7,438.3 599.7,411.3 601.6,438.3 603.6,411.3 605.3,438.3 607.5,441.9 610.0,411.3 611.9,438.3 614.2,438.3 615.0,394.6 616.1,382.1 618.1,439.2 620.0,453.1 622.3,502.6 624.2,447.0 626.2,479.0 628.4,479.0 630.0,411.3 632.0,337.6 633.9,316.7 636.2,321.7 641.2,321.7 645.4,329.2 648.4,334.8 651.8,326.4 655.1,312.5 656.5,349.5 658.4,326.4 660.7,352.9 662.6,329.2 664.6,357.9 666.8,315.3 669.0,334.0 672.9,334.0 674.9,343.1 676.8,330.6 679.0,315.3 680.7,352.3 682.9,330.6 684.9,311.1 686.8,337.6 688.8,313.9 691.3,327.8 692.9,350.1 694.9,325.0 697.1,313.9 699.6,340.4 701.3,361.2 703.0,439.2 705.2,439.2 706.9,362.6 709.1,322.3 710.8,418.3 712.7,322.3 714.9,316.7 716.9,330.6 719.1,325.0 720.8,350.1 723.0,373.8 725.0,318.1 726.9,337.6 728.9,317.3 733.0,317.3 735.3,325.0 737.2,341.7 739.1,320.9 741.4,325.0 743.3,341.7 745.0,316.7 747.0,320.9 748.9,336.2 750.9,343.1 752.8,325.0 755.0,317.3 757.3,326.4 759.2,334.0 761.4,334.0 763.4,326.4 765.6,325.6 767.3,321.7 771.2,321.7 773.4,343.1 775.4,339.0 777.6,318.1 779.5,338.4 781.8,338.4 783.7,318.1 785.7,336.2 787.6,345.9 789.6,341.7 791.5,373.8 793.4,330.6 795.7,361.2 797.6,325.0 799.6,316.7 801.8,320.9 804.0,315.3 805.7,377.9 807.9,317.3 810.1,317.3 811.8,355.7 814.0,405.8 816.0,329.2 817.9,339.0 819.9,326.4 821.8,361.2 823.8,322.3 825.7,365.4 827.7,334.8 829.6,352.9 831.9,362.6 833.8,330.6 835.8,341.7 838.0,322.3 839.6,336.2 841.9,322.3 844.1,320.9 846.3,320.0 848.3,315.3 850.2,329.2 851.9,354.3 853.8,333.4 856.1,333.4 858.0,405.8 860.2,347.3 862.2,317.3 866.4,317.3 868.6,326.4 870.5,315.3 872.8,327.8 875.0,341.7 876.7,352.9 878.1,339.0 879.8,397.4 881.7,438.3 887.8,438.3 890.0,355.7 892.0,340.4 893.9,322.8 896.2,350.1 898.4,359.8 900.3,348.7 902.3,330.6 904.2,397.4 906.2,365.4 908.1,361.2 910.1,379.3 912.3,350.1 914.3,330.6 916.2,351.5 917.9,377.9 920.1,318.1 924.0,318.1 926.2,322.3 928.5,327.8 930.4,348.7 932.4,318.1 934.6,318.1 936.5,337.6 938.5,318.1 940.7,318.1 942.7,333.4 944.6,313.4 946.3,339.0 948.2,313.4 950.2,332.0 952.1,322.3 954.1,321.7 956.8,321.7 958.8,326.4 961.0,326.4 963.0,321.7 966.6,321.7 968.5,336.2 970.5,318.1 973.0,318.1 974.9,341.7 976.9,325.0 978.8,329.2 980.8,315.3 983.0,325.0 985.0,320.9 986.9,329.2 988.6,322.3 990.2,352.9 993.0,409.9 994.7,329.2 996.9,329.2 998.6,313.9 1000.8,340.4 1002.8,326.4 1005.0,322.3 1006.7,401.6 1008.9,325.0 1010.9,320.9 1012.8,325.0 1014.8,341.7 1016.7,345.9 1018.9,345.9 1020.9,322.3 1022.8,348.7 1024.8,330.6 1026.7,352.9 1028.7,326.4 1030.9,414.1 1032.9,377.9 1034.8,341.7 1036.7,341.7 1039.0,322.3 1040.9,344.5 1043.1,365.4 1045.1,327.8 1047.0,312.5 1049.0,345.9 1051.2,329.2 1053.2,318.1 1055.1,347.3 1057.1,383.5 1059.0,416.9 1061.2,438.3 1067.4,438.3 1069.3,464.2 1071.3,444.7 1073.5,409.9 1075.7,394.6 1079.3,375.1 1081.3,391.8 1083.5,419.7 1085.5,437.8 1087.4,409.9 1090.2,409.9 1091.6,438.3 1095.8,438.3 1097.7,412.7 1099.6,430.8 1101.6,465.6 1103.5,441.9 1105.8,436.4 1107.7,502.6 1109.7,453.1 1111.9,436.4 1114.1,419.7 1116.1,377.9 1118.0,333.4 1120.2,322.3 1123.6,321.7 1125.8,316.7 1128.0,322.3 1130.0,318.1 1135.0,318.1 1140.3,318.1 1142.3,322.3 1144.5,318.1 1154.2,318.1 1156.2,322.3 1158.4,318.1 1166.2,318.1 1168.1,327.8 1170.1,318.1 1172.3,318.1 1174.3,326.4 1176.5,330.6 1178.4,320.9 1180.1,332.0 1182.1,318.1 1191.8,318.1 1194.0,322.3 1196.8,318.1 1198.5,318.1 1200.1,352.9 1201.8,429.4 1203.8,437.8 1206.3,444.7 1208.5,411.3 1210.4,438.3 1214.1,438.3 1216.3,411.3 1218.2,438.3 1220.2,407.2 1222.4,405.8 1224.4,387.7 1226.3,416.9 1228.5,437.8 1230.8,409.9 1234.9,418.3 1236.9,439.2 1239.1,433.6 1240.8,407.2 1242.7,443.3 1244.7,443.3 1246.6,375.1 1248.6,439.2 1250.8,443.3 1253.0,421.1 1254.7,425.2 1256.6,407.2 1258.6,438.3 1260.8,438.3 1262.8,414.1 1265.0,438.3 1271.1,438.3 1273.1,409.9 1275.0,426.6 1277.0,430.8 1278.9,407.2 1280.6,438.3 1282.6,407.2 1284.5,438.3 1286.7,386.8 1288.7,438.3 1290.6,419.7 1293.1,400.2 1295.1,439.2 1297.0,444.7 1299.0,414.1 1301.2,404.4 1303.1,396.0 1305.1,419.7 1307.0,412.7 1309.0,428.0 1310.9,441.9 1312.9,502.6 1314.8,457.3 1316.8,461.4 1319.0,480.9 1321.0,438.3 1322.9,438.3 1324.6,400.2 1326.8,318.1 1329.0,318.1 1331.3,321.7 1333.5,321.7 1335.4,330.6 1337.4,349.5 1339.3,321.7 1341.3,317.3 1343.5,321.7 1345.7,318.1 1348.0,318.1 1349.9,322.3 1351.9,331.2 1353.8,320.9 1355.8,325.0 1357.7,341.7 1359.6,322.3 1361.6,357.1 1363.5,347.3 1365.5,343.1 1367.4,339.0 1369.4,341.7 1371.3,318.1 1373.6,318.1 1375.5,333.4 1377.5,344.5 1379.7,354.3 1381.6,318.1 1383.6,344.5 1385.8,327.8 1387.8,325.0 1389.7,329.2 1391.9,337.6 1393.9,325.0 1395.0,359.8 1397.0,318.1 1398.9,334.8 1400.6,318.1 1402.3,318.1 1403.9,386.3 1405.9,336.2 1407.8,341.7 1409.8,326.4 1411.7,352.9 1413.7,318.9 1415.6,330.6 1417.8,311.1 1419.8,343.1 1421.7,323.7 1423.7,337.6 1425.6,312.5 1427.6,333.4 1429.8,333.4 1431.8,315.3 1433.7,349.5 1435.7,333.4 1437.9,333.4 1439.8,351.5 1441.8,312.5 1443.7,332.0 1445.7,322.3 1447.6,325.0 1449.6,340.4 1451.5,313.9 1453.7,326.4 1455.7,369.6 1457.9,437.8 1459.9,369.6 1461.8,354.3 1464.0,409.9 1466.0,341.7 1467.9,344.5 1469.9,318.1 1471.8,336.2 1474.1,377.9 1476.0,347.3 1478.0,377.9 1479.9,326.4 1481.9,344.5 1483.8,365.4 1485.8,351.5 1488.3,433.6 1490.2,355.7 1492.4,318.1 1496.3,318.1 1498.0,352.9 1499.9,318.1 1501.9,341.7 1504.1,341.7 1506.1,377.9 1508.0,382.1 1510.2,377.9 1512.2,377.9 1514.1,364.0 1516.1,346.8 1518.3,372.4 1520.3,351.5 1522.2,333.4 1524.2,322.3 1525.0,326.4 1526.7,377.9 1528.4,341.7 1530.3,322.3 1532.3,373.8 1534.5,347.3 1536.7,332.0 1538.9,325.0 1541.2,320.0 1542.8,333.4 1544.8,336.2 1546.7,357.1 1548.7,330.6 1550.6,316.7 1552.9,322.3 1554.5,329.2 1556.7,325.0 1558.7,361.2 1560.6,325.0 1562.9,313.9 1564.8,369.6 1566.8,330.6 1568.7,361.2 1570.9,316.7 1572.9,322.3 1574.8,318.1 1576.8,318.1 1579.0,322.3 1581.0,311.7 1582.9,339.0 1584.6,320.0 1586.8,333.4 1588.8,351.5 1590.7,345.9 1592.9,334.8 1594.9,318.1 1597.7,318.1 1599.6,322.3 1601.6,332.0 1603.5,318.1 1606.8,318.1 1608.8,336.2 1610.7,322.3 1612.7,369.6 1614.6,322.3 1616.6,366.8 1619.1,405.8 1621.3,341.7 1623.0,341.7 1624.9,326.4 1626.9,330.6 1628.8,326.4 1630.8,320.9 1632.7,339.0 1634.7,334.8 1636.9,361.2 1639.1,318.1 1641.1,341.7 1643.0,326.4 1645.8,326.4 1647.8,350.1 1649.7,322.3 1651.7,365.4 1653.6,339.0 1655.0,333.4 1657.2,312.5 1658.9,329.2 1661.1,312.5 1663.4,343.1 1665.6,320.9 1667.8,316.7 1670.0,320.9 1672.0,339.0 1673.9,333.4 1676.2,329.2 1678.4,329.2 1680.3,334.8 1682.0,389.1 1684.0,401.6 1685.9,375.1 1687.9,405.8 1690.1,350.1 1692.0,322.3 1694.0,361.2 1695.9,334.8 1697.9,373.8 1699.8,326.4 1702.1,341.7 1704.0,393.2 1706.0,340.4 1707.9,316.1 1709.8,322.3 1712.1,316.7 1714.0,334.8 1720.1,320.9 1722.4,350.1 1724.0,366.8 1726.0,382.1 1727.9,327.8 1729.9,334.8 1731.8,383.5 1734.1,413.6 1736.0,333.4 1738.0,333.4 1739.9,384.9 1741.9,326.4 1743.8,368.2 1745.8,397.4 1748.0,339.0 1750.2,377.9 1752.2,390.5 1754.1,334.8 1756.0,364.0 1757.7,409.9 1759.7,440.6 1761.9,435.0 1763.8,439.2 1766.3,438.6 1768.6,433.6 1770.8,437.8" fill="none" stroke="#4285f4" stroke-width="2" stroke-linejoin="round"/>
</svg>
<div class="a" style="left:0;top:913px;width:1838px;height:13px;background:#fff;border-top:1px solid #e2e2e2"></div>
<div class="a" style="left:0;top:914px;width:43px;height:12px;background:#f8f9fa"></div>
<div class="a" style="left:43px;top:913px;width:1px;height:13px;background:#e2e2e2"></div>
<div class="a" style="left:46px;top:915px;width:1270px;height:9px;border-radius:5px;background:#dadce0"></div>
<div class="a" style="left:0;top:926px;width:1838px;height:1px;background:#e2e2e2"></div>
<div class="a" style="left:0;top:927px;width:1838px;height:36px;background:#f9fbfd"></div>
<svg class="a" style="left:54px;top:940px" width="12" height="12" viewBox="0 0 12 12"><path d="M6 1v10M1 6h10" stroke="#444746" stroke-width="1.8"/></svg>
<svg class="a" style="left:93px;top:940px" width="14" height="12" viewBox="0 0 14 12"><path d="M0 1.8h14M0 6h14M0 10.2h14" stroke="#444746" stroke-width="1.6"/></svg>
<div class="a" style="left:618px;top:927px;width:130px;height:36px;background:#e1e9f7"></div>
<div class="tab" style="left:144.5px;color:#444746">Agenda</div>
<svg class="a" style="left:209px;top:944px" width="8" height="5" viewBox="0 0 8 5"><path d="M0 0h8l-4 4.5z" fill="#444746"/></svg>
<div class="tab" style="left:242px;color:#444746">TestPlan</div>
<svg class="a" style="left:311.6px;top:944px" width="8" height="5" viewBox="0 0 8 5"><path d="M0 0h8l-4 4.5z" fill="#444746"/></svg>
<div class="tab" style="left:345.7px;color:#444746">Bugs</div>
<svg class="a" style="left:391px;top:944px" width="8" height="5" viewBox="0 0 8 5"><path d="M0 0h8l-4 4.5z" fill="#444746"/></svg>
<div class="tab" style="left:424px;color:#444746">Devices</div>
<svg class="a" style="left:489px;top:944px" width="8" height="5" viewBox="0 0 8 5"><path d="M0 0h8l-4 4.5z" fill="#444746"/></svg>
<div class="tab" style="left:522.3px;color:#444746">Checklist</div>
<svg class="a" style="left:598px;top:944px" width="8" height="5" viewBox="0 0 8 5"><path d="M0 0h8l-4 4.5z" fill="#444746"/></svg>
<div class="tab" style="left:631.3px;color:#0b57d0">Perfomance</div>
<svg class="a" style="left:728px;top:944px" width="8" height="5" viewBox="0 0 8 5"><path d="M0 0h8l-4 4.5z" fill="#0b57d0"/></svg>
<div class="tab" style="left:759.5px;color:#444746">Feedback</div>
<svg class="a" style="left:838.5px;top:944px" width="8" height="5" viewBox="0 0 8 5"><path d="M0 0h8l-4 4.5z" fill="#444746"/></svg>
<div class="tab" style="left:871.6px;color:#444746">Network</div>
<svg class="a" style="left:941px;top:944px" width="8" height="5" viewBox="0 0 8 5"><path d="M0 0h8l-4 4.5z" fill="#444746"/></svg>
<div class="tab" style="left:973.6px;color:#444746">Guidelines</div>
<svg class="a" style="left:1058px;top:944px" width="8" height="5" viewBox="0 0 8 5"><path d="M0 0h8l-4 4.5z" fill="#444746"/></svg>
<div class="tab" style="left:1091.6px;color:#444746">Reviews</div>
<svg class="a" style="left:1163.4px;top:944px" width="8" height="5" viewBox="0 0 8 5"><path d="M0 0h8l-4 4.5z" fill="#444746"/></svg>
<div class="a" style="left:0;top:963px;width:1838px;height:7px;background:linear-gradient(90deg,#33312b 0,#36332c 245px,#5b5953 245px,#5b5953 289px,#1e1d1b 289px,#1e1d1b 292px,#312e2b 292px,#2f2c2c 900px,#26282b 960px,#232529 1150px,#2d2a22 1250px,#2b271f 1838px)"></div>
</body></html>
